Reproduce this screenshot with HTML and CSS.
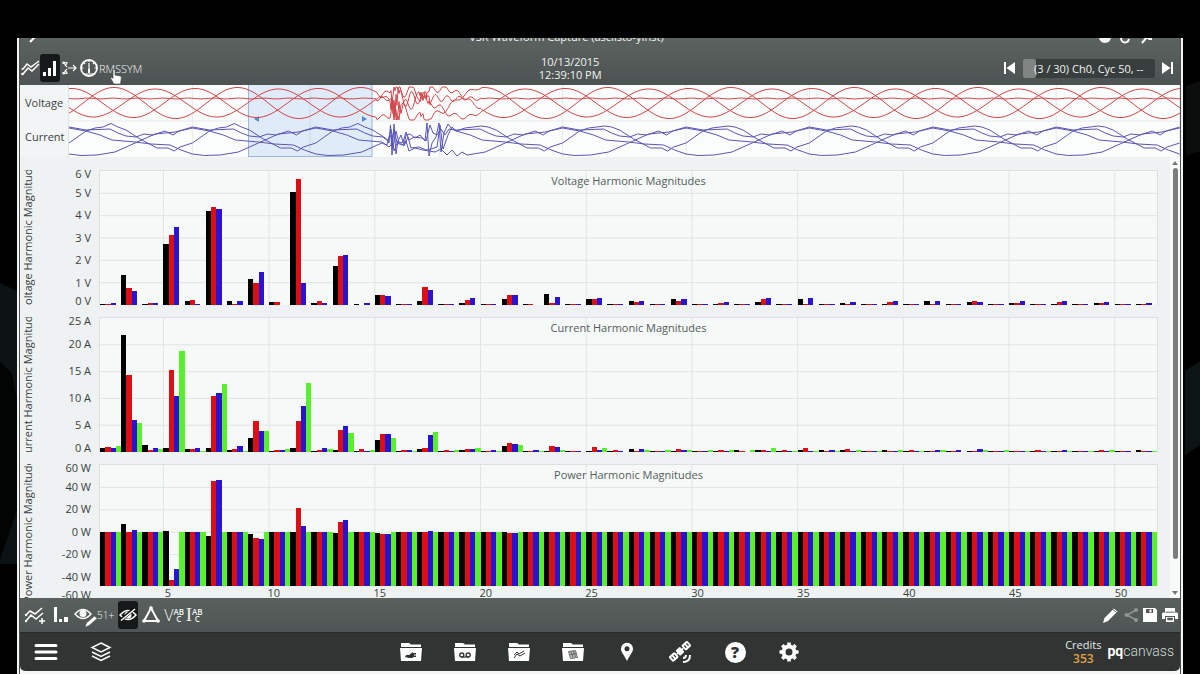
FILE: index.html
```html
<!DOCTYPE html>
<html lang="en">
<head>
<meta charset="utf-8">
<title>pqcanvass – Waveform Capture</title>
<link rel="stylesheet" href="styles.css">
</head>
<body>
<svg class="backdrop backdrop-left" viewBox="0 0 17 674" preserveAspectRatio="none" aria-hidden="true">
  <path d="M0 283l17 8v273H0v-10l15-45V400L12 374 0 362z" fill="#0d1314"/>
  <path d="M0 362l12 12 5 26v110L0 560z" fill="#020303"/>
</svg>
<svg class="backdrop backdrop-right" viewBox="0 0 17 674" preserveAspectRatio="none" aria-hidden="true">
  <path d="M3 86l14-5v70L3 156z" fill="#0c0e0e"/>
  <path d="M2 371l15-10v84L2 455z" fill="#0d1414"/>
</svg>
<main class="window">
  <header class="topbar">
    <div class="title-row">
      <button class="back" aria-label="Back"><svg width="10" height="12" viewBox="0 0 10 12"><path d="M3 1l4 5-5 5" class="ln"/></svg></button>
      <h1>VSR Waveform Capture (asciisto-yInst)</h1>
      <div class="title-icons">
        <svg width="14" height="14" viewBox="0 0 14 14"><circle cx="7" cy="7" r="6" fill="#f4f7f6"/><path d="M7 3v4" stroke="#555b5a" stroke-width="2"/></svg>
        <svg width="12" height="14" viewBox="0 0 12 14"><path d="M3 5a4 4 0 1 0 6 4" class="ln"/></svg>
        <svg width="14" height="14" viewBox="0 0 14 14"><path d="M2 13l5-6 2 2h3" class="ln"/></svg>
      </div>
    </div>
    <div class="nav-row">
      <div class="tools">
        <button aria-label="Waveform"><svg width="20" height="20" viewBox="0 0 20 20"><path d="M3 11l4-5 4 3 8-6M3 16l5-6 4 3 7-7" class="ln thin"/><circle cx="2.500" cy="16" r="1.300" fill="#fff"/><circle cx="2.500" cy="11" r="1" fill="#fff"/></svg></button>
        <button class="active" aria-label="Harmonics"><svg width="16" height="20" viewBox="0 0 16 20"><path d="M1 14h3v4H1zM6 10h3v8H6zM11 3h3v15h-3z" fill="#fff"/></svg></button>
        <button aria-label="Phasors"><svg width="19" height="20" viewBox="0 0 19 20"><path d="M3 4l4 1-2 3M4 5l3 4M3 16l4-1-2-3M4 15l3-4M3 4v2M3 16v-2M8 10h8M13 7l3 3-3 3" class="ln fine"/></svg></button>
        <button aria-label="Meters"><svg width="20" height="20" viewBox="0 0 20 20"><circle cx="10" cy="10" r="8" fill="none" stroke="#fff" stroke-width="1.800"/><path d="M10 5v10M10 2v2M2.500 10h2M15.500 10h2M4.700 4.700l1.400 1.400M15.300 4.700l-1.400 1.400M5 16h10" stroke="#fff" stroke-width="1.200"/><rect x="9" y="11" width="2" height="4" fill="#fff"/></svg></button>
        <button class="text-tool">RMS</button><button class="text-tool">SYM</button>
      </div>
      <time class="stamp" datetime="2015-10-13T12:39:10">10/13/2015<br>12:39:10 PM</time>
      <div class="pager">
        <button aria-label="Previous"><svg width="12" height="12" viewBox="0 0 12 12"><path d="M0 0h2v12H0zM11 0v12L2.500 6z" fill="#fff"/></svg></button>
        <div class="slider">
          <input id="capture" type="range" min="1" max="30" value="1">
          <label for="capture">(3 / 30) Ch0, Cyc 50, --</label>
        </div>
        <button aria-label="Next"><svg width="12" height="12" viewBox="0 0 12 12"><path d="M9 0h2v12H9zM0 0v12l8.500-6z" fill="#fff"/></svg></button>
      </div>
    </div>
    <svg class="cursor" width="12" height="16" viewBox="0 0 12 16" aria-hidden="true"><path d="M3 1.500c0-1.500 2-1.500 2 0V6l5 1c1 .3 1.500 1 1.300 2L10.500 15H4L1 10c-.6-1.200.5-2 1.300-1.200L3 9.500z" fill="#fff" stroke="#444" stroke-width=".6"/></svg>
  </header>

  <section class="overview">
    <div class="overview-labels"><span>Voltage</span><span>Current</span></div>
    <svg id="waves" viewBox="0 0 1111 72" preserveAspectRatio="none" role="img" aria-label="Voltage and current waveforms"></svg>
  </section>

  <section class="panel">
    <div class="charts" id="charts"></div>
    <div class="scrollbar" aria-hidden="true">
      <svg width="6" height="4" viewBox="0 0 6 4"><path d="M3 0l3 4H0z" fill="#777"/></svg>
      <div class="track"><div class="thumb"></div></div>
      <svg width="6" height="4" viewBox="0 0 6 4"><path d="M3 4l3-4H0z" fill="#777"/></svg>
    </div>
  </section>

  <div class="toolbar">
    <div class="tools">
      <button aria-label="Add chart"><svg width="22" height="20" viewBox="0 0 22 20"><path d="M2 10l4-4 5 3 7-6M2 16l5-6 5 4 7-6M18 13v6M15 16h6" class="ln thin"/><circle cx="2" cy="10" r="1.200" fill="#fff"/><circle cx="2" cy="16" r="1.200" fill="#fff"/></svg></button>
      <button class="bars" aria-label="Bars"><svg width="16" height="20" viewBox="0 0 16 20"><path d="M1 2h3v15H1zM6 14h3v3H6zM11 12h4v5h-4z" fill="#fff"/></svg></button>
      <button aria-label="Edit view"><svg width="24" height="24" viewBox="0 0 24 24"><path d="M2 11q8-9 16 0-8 9-16 0z" fill="none" stroke="#fff" stroke-width="1.500"/><circle cx="10" cy="10.500" r="3.500" fill="#fff"/><path d="M12 24l1.500-4 8-7 2.500 2.500-8 7z" fill="#fff" stroke="#555b5a" stroke-width=".5"/></svg></button>
      <button class="count">51+</button>
      <button class="active" aria-label="Hide"><svg width="18" height="20" viewBox="0 0 18 20"><path d="M1 10q8-9 16 0-8 9-16 0z" fill="none" stroke="#fff" stroke-width="1.500"/><circle cx="9" cy="10" r="3.500" fill="#fff"/><path d="M2 15L15 4" stroke="#111" stroke-width="3.500"/><path d="M2 15.500L16 4" class="ln thin"/></svg></button>
      <button class="delta" aria-label="Delta"><svg width="22" height="20" viewBox="0 0 22 20"><path d="M11 3l7 13H4z" class="ln"/><g fill="#fff"><circle cx="11" cy="3" r="1.800"/><circle cx="18" cy="16" r="1.800"/><circle cx="4" cy="16" r="1.800"/></g></svg></button>
      <button class="phase" aria-label="Voltage phases"><span>V</span><small>AB<br>C</small></button>
      <button class="phase" aria-label="Current phases"><span class="serif">I</span><small>AB<br>C</small></button>
    </div>
    <div class="actions">
      <button aria-label="Edit"><svg width="16" height="16" viewBox="0 0 16 16"><path d="M0 16l1.500-5L11 1.500l3.500 3L5 14z" fill="#fff"/><path d="M10 2.500l3.500 3" stroke="#555b5a" stroke-width=".8"/></svg></button>
      <button aria-label="Share"><svg width="14" height="16" viewBox="0 0 14 16"><path d="M12 3L3 8l9 5" fill="none" stroke="#909594" stroke-width="1.500"/><g fill="#909594"><circle cx="12" cy="3" r="2"/><circle cx="2.500" cy="8" r="2"/><circle cx="12" cy="13" r="2"/></g></svg></button>
      <button aria-label="Save"><svg width="14" height="14" viewBox="0 0 14 14"><path d="M0 0h12l2 2v12H0z" fill="#fff"/><path d="M3 1h7v4H3z" fill="#555b5a"/><path d="M6.500 1.500h2v3h-2z" fill="#fff"/></svg></button>
      <button aria-label="Print"><svg width="16" height="14" viewBox="0 0 16 14"><path d="M3 0h10v4H3zM1 4.500h14l1 1V11h-3V8H3v3H0V5.500zM4 9h8v5H4z" fill="#fff"/><path d="M5.500 10h5v2h-5zM4 4h8" fill="#555b5a" stroke="#555b5a" stroke-width=".6"/></svg></button>
    </div>
  </div>

  <footer class="dock">
    <div class="dock-left">
      <button aria-label="Menu"><svg width="24" height="18" viewBox="0 0 24 18"><path d="M2 2.500h20M2 9h20M2 15.500h20" stroke="#fff" stroke-width="3" stroke-linecap="round"/></svg></button>
      <button aria-label="Layers"><svg width="22" height="20" viewBox="0 0 22 20"><path d="M11 1l9 4.500-9 4.500-9-4.500zM2 10l9 4.500 9-4.500M2 14l9 4.500 9-4.500" class="ln thin"/></svg></button>
    </div>
    <nav class="dock-center">
      <button aria-label="Sources"><svg width="24" height="20" viewBox="0 0 24 20"><path class="folder" d="M2 1h8l2 1.500h10V5H2zM1 6h22l-1 13H2z"/><path d="M6 15q1-3 4-2l4-3v6h-4zM14 11h3v1.500h-2v1h2V15h-3z" fill="#303534"/></svg></button>
      <button aria-label="Recordings"><svg width="24" height="20" viewBox="0 0 24 20"><path class="folder" d="M2 1h8l2 1.500h10V5H2zM1 6h22l-1 13H2z"/><path d="M8.500 15h7" stroke="#303534" stroke-width="1.300"/><g fill="none" stroke="#303534" stroke-width="1.400"><circle cx="8.800" cy="13" r="2"/><circle cx="15.200" cy="13" r="2"/></g></svg></button>
      <button aria-label="Waveforms"><svg width="24" height="20" viewBox="0 0 24 20"><path class="folder" d="M2 1h8l2 1.500h10V5H2zM1 6h22l-1 13H2z"/><path d="M7 13l3-3 2 2 5-3M7 16l3-4 3 2 5-3" fill="none" stroke="#303534"/></svg></button>
      <button aria-label="Reports"><svg width="24" height="20" viewBox="0 0 24 20"><path class="folder" d="M2 1h8l2 1.500h10V5H2zM1 6h22l-1 13H2z"/><path d="M7.500 9.500l7-1 2 7-7 1zM10 9.500l2 6M12.500 9l2 6M8.500 12.500l7-1" fill="#b4b8b7" stroke="#555b5a" stroke-width=".8"/></svg></button>
      <button aria-label="Locations"><svg width="24" height="20" viewBox="0 0 24 20"><path d="M12 19C9 13 6 10 6 6.800a6 6 0 0 1 12 0C18 10 15 13 12 19z" fill="#fff"/><circle cx="12" cy="6.800" r="2.500" fill="#303534"/></svg></button>
      <button aria-label="Satellite"><svg width="24" height="22" viewBox="0 0 24 22"><g transform="rotate(-42 11 11)"><rect x="-1" y="7" width="8" height="7" rx="1.500" fill="#fff"/><rect x="8.500" y="7" width="6" height="7" rx="1" fill="#fff"/><rect x="16" y="7" width="8" height="7" rx="1.500" fill="#fff"/><path d="M7 10.500h9" stroke="#fff" stroke-width="1.500"/><path d="M1.500 9v3M4.500 9v3M18.500 9v3M21.500 9v3" stroke="#303534" stroke-width="1.200"/></g><path d="M14 17q3 0 3-3M14 21q7 0 7-7" class="ln"/></svg></button>
      <button aria-label="Help"><span class="help">?</span></button>
      <button aria-label="Settings"><svg width="24" height="20" viewBox="0 0 24 20"><circle cx="12" cy="10" r="5.500" fill="none" stroke="#fff" stroke-width="4"/><path d="M12 .5v4M12 15.500v4M2.500 10h4M17.500 10h4M5.300 3.300l3 3M15.700 13.700l3 3M18.700 3.300l-3 3M8.300 13.700l-3 3" stroke="#fff" stroke-width="3.600"/></svg></button>
    </nav>
    <div class="dock-right">
      <div class="credits"><span>Credits</span><strong>353</strong></div>
      <a class="brand" href="#"><b>pq</b>canvass</a>
    </div>
  </footer>
</main>
<script src="app.js"></script>
</body>
</html>
```

FILE: styles.css
```css
* { box-sizing: border-box; }

body {
  margin: 0;
  padding: 38px 17px 0;
  height: 100vh;
  display: flex;
  flex-direction: column;
  overflow: hidden;
  background: #000;
  font-family: "Open Sans", "Noto Sans", sans-serif;
  font-size: 11px;
  color: #3a3f3f;
}

button {
  display: flex;
  align-items: center;
  justify-content: center;
  padding: 0;
  border: 0;
  background: none;
  color: inherit;
  font: inherit;
}

svg { display: block; }
.ln { fill: none; stroke: #fff; stroke-width: 2; }
.ln.thin { stroke-width: 1.5; }
.ln.fine { stroke-width: 1.2; }

.backdrop { position: absolute; top: 0; width: 17px; height: 100%; }
.backdrop-left { left: 0; }
.backdrop-right { right: 0; }

.window {
  flex: 1;
  min-height: 0;
  display: flex;
  flex-direction: column;
  padding: 0 3px 3px;
  background: linear-gradient(90deg, #f4f6f6 2px, #4a4f4f 2px, #4a4f4f 3px, #f4f6f6 3px, #f4f6f6 calc(100% - 3px), #4a4f4f calc(100% - 3px), #4a4f4f calc(100% - 2px), #f4f6f6 calc(100% - 2px));
}

/* Header */
.topbar {
  position: relative;
  height: 47px;
  overflow: hidden;
  background: linear-gradient(#5c6260, #4d5352);
  color: #f0f3f2;
}
.title-row, .nav-row {
  display: grid;
  grid-template-columns: 9fr auto 10fr;
  align-items: center;
}
.title-row {
  height: 18px;
  margin-top: -10px;
  padding: 0 26px 0 8px;
}
.title-row h1 { margin: 0; font-size: 11px; font-weight: 400; line-height: 18px; }
.back { justify-self: start; }
.title-icons { display: flex; justify-content: flex-end; gap: 8px; }
.nav-row {
  height: 36px;
  margin-top: 4px;
}
.nav-row, .toolbar { padding-right: 2px; }
.tools { display: flex; align-items: center; }
.tools .active { height: 28px; width: 20px; border-radius: 3px; background: #151919; }
.text-tool { font-weight: 300; }
.stamp { text-align: center; line-height: 13px; }
.pager { display: flex; justify-content: flex-end; align-items: center; gap: 7px; padding-right: 4px; }
.slider { display: grid; width: 132px; height: 19px; align-items: center; }
.slider > * { grid-area: 1 / 1; }
.slider input {
  appearance: none;
  width: 100%;
  height: 19px;
  margin: 0;
  border-radius: 2px;
  background: #383e3d;
}
.slider input::-webkit-slider-thumb { appearance: none; width: 13px; height: 19px; border-radius: 2px; background: #808584; }
.slider label { padding-left: 11px; white-space: nowrap; pointer-events: none; }
.cursor { position: absolute; left: 90px; top: 31px; }

/* Waveform overview */
.overview { display: grid; grid-template-columns: 49px 1fr; height: 72px; background: #f2f5f5; }
.overview-labels { display: grid; grid-template-rows: 1fr 1fr; align-items: center; padding: 0 0 3px 5px; border-right: 1px solid #dde3e2; }
#waves { width: 100%; height: 100%; background: #fbfdfd; }
#waves polyline, #waves line { fill: none; vector-effect: non-scaling-stroke; }
.volt { stroke: #d2474c; }
.amp { stroke: #5a55b8; }
#waves .guide { stroke: #e3ebea; }

/* Chart panel */
.panel { flex: 1; min-height: 0; display: grid; grid-template-columns: 1fr 10px; overflow: hidden; background: #eef2f2; }
.charts { display: flex; flex-direction: column; gap: 12px; padding: 13px 12px 0 0; min-height: 0; }
.chart { display: grid; grid-template-columns: 16px 63px 1fr; height: 135px; flex: none; }
.axis-name { display: flex; align-items: center; justify-content: center; overflow: hidden; height: 135px; padding-bottom: 6px; }
.axis-name span { writing-mode: vertical-rl; transform: rotate(180deg); white-space: nowrap; line-height: 14px; flex: none; }
.axis-y { display: flex; flex-direction: column; height: 135px; padding-right: 8px; text-align: right; }
.axis-y span { flex: 2 1 0; display: flex; align-items: center; justify-content: flex-end; min-height: 0; line-height: 8px; }
.axis-y span:first-child { flex: 1 1 0; align-items: flex-start; }
.axis-y span:last-child { flex: 1 1 0; align-items: flex-end; }
.plot { display: grid; grid-template-rows: 135px auto; }
.plot.short { grid-template-rows: 122px auto; }
.plot > svg, .plot > h2 { grid-area: 1 / 1; }
.plot > svg { width: 100%; height: 100%; background: #f5f9f8; border: 1px solid #dbe0e0; border-bottom: 0; }
.plot > h2 { margin: 0; padding-top: 3px; text-align: center; font-size: 11px; font-weight: 400; line-height: 15px; color: #555b5b; z-index: 1; }
.grid { stroke: #dfe5e4; vector-effect: non-scaling-stroke; }
.axis-x { display: flex; padding-left: 16px; margin-right: -16px; line-height: 14px; }
.axis-x span { flex: 1; text-align: center; }
.scrollbar { display: flex; flex-direction: column; align-items: center; gap: 3px; padding: 4px 0 3px; background: #f8fafa; }
.track { flex: 1; width: 5px; }
.thumb { width: 5px; height: 93%; border-radius: 3px; background: #797d7d; }

/* Lower toolbar */
.toolbar { display: flex; justify-content: space-between; align-items: center; height: 34px; padding-left: 4px; background: linear-gradient(#5a605e, #4f5554); color: #f0f3f2; }
.bars { margin: 0 4px 0 7px; }
.count { font-size: 10px; font-weight: 300; margin-right: 4px; }
.delta { margin: 0 2px; }
.phase { width: 20px; }
.phase span { font-size: 16px; font-weight: 300; line-height: 20px; }
.phase .serif { font-family: "Liberation Serif", serif; font-size: 19px; }
.phase small { font-size: 8px; font-weight: 600; line-height: 7px; }
.actions { display: flex; align-items: center; gap: 5px; }

/* Dock */
.dock {
  display: grid;
  grid-template-columns: 1fr auto 1fr;
  align-items: center;
  height: 39px;
  border-radius: 0 0 5px 5px;
  background: #303534;
  border-top: 1px solid #262b2a;
  color: #e6eae9;
}
.dock-left { display: flex; gap: 32px; padding-left: 14px; }
.dock-center { display: flex; gap: 29px; }
.dock-center { gap: 30px; }
.dock-center button { width: 24px; height: 24px; }
.folder { fill: #fff; }
.help { width: 21px; height: 21px; border-radius: 50%; background: #fff; color: #303534; font-size: 16px; font-weight: 800; line-height: 21px; }
.dock-right { display: flex; justify-content: flex-end; align-items: center; gap: 6px; padding-right: 6px; }
.credits { display: flex; flex-direction: column; align-items: center; line-height: 14px; }
.credits strong { color: #e0a044; font-size: 12px; font-weight: 600; }
.brand { color: #d5dad9; text-decoration: none; font-family: Roboto, sans-serif; font-size: 14px; font-weight: 300; line-height: 18px; padding-bottom: 3px; }
.brand b { color: #fff; font-weight: 700; }
```

FILE: app.js
```js
const COLORS = ["#000", "#dc1014", "#2a14d2", "#58f02c"];
const FIRST = 2, COUNT = 50;

const voltage = {
  2: [.06, .04, .07], 3: [1.33, .75, .62], 4: [.05, .1, .07], 5: [2.75, 3.12, 3.5],
  6: [.2, .23, .04], 7: [4.22, 4.4, 4.3], 8: [.2, .03, .17], 9: [1.15, 1, 1.47],
  10: [.12, .13, .02], 11: [5.05, 5.65, .97], 12: [.08, .18, .1], 13: [1.76, 2.2, 2.24],
  14: [.06, .02, .07], 15: [.47, .47, .4], 16: [.05, .04, .03], 17: [.18, .8, .68],
  19: [.1, .22, .33], 21: [.28, .45, .45], 22: [.05, .03, .02], 23: [.48, .1, .37],
  25: [.27, .27, .32], 27: [.2, .15, .18], 29: [.28, .2, .25], 31: [.04, .1, .12],
  33: [.15, .25, .3], 35: [.28, .04, .3], 36: [.05, .03, .03], 37: [.1, .06, .15],
  38: [.05, .03, .03], 39: [.06, .12, .2], 41: [.17, .05, .17], 43: [.12, .17, .12],
  45: [.07, .07, .18], 47: [.05, .12, .18], 49: [.07, .1, .14], 51: [.04, .04, .08]
};
const current = {
  2: [.8, .95, .8, 1.1], 3: [21.8, 14.3, 6, 5.5], 4: [1.3, .3, .7, .6], 5: [.7, 15.3, 10.5, 18.9],
  6: [.5, .6, .7, .1], 7: [.7, 10.4, 11, 12.6], 8: [.4, .6, 1.1, .2], 9: [2.6, 5.8, 4, 4],
  10: [.2, .4, .4, .6], 11: [.8, 5.8, 8.5, 12.8], 12: [.2, .4, .8, .6], 13: [.4, 4.1, 4.9, 3.6],
  14: [.1, .5, .2, .3], 15: [2.2, 3.3, 3.4, 2.6], 16: [.2, .4, .4, .2], 17: [.6, .7, 3.1, 3.8],
  18: [.1, .4, .1, .3], 19: [.3, .6, .5, .8], 20: [.1, .1, .3, .1], 21: [1.1, 1.6, 1.4, 1.3],
  22: [.2, .1, .4, .2], 23: [.1, 1.2, 1, .3], 25: [.2, 1, .3, .7], 26: [.1, .4, .1, 0],
  27: [.5, .1, .5, .4], 28: [.1, .1, .2, .3], 29: [.1, .5, .3, .4], 30: [.1, .1, .2, .4],
  31: [.1, .3, .1, .4], 32: [.3, .1, 0, .4], 33: [.3, .3, .1, .8], 34: [.1, .3, .1, .1],
  35: [.3, .7, .1, .1], 36: [.4, .2, .3, .1], 37: [.3, .6, .1, .4], 38: [.1, .1, .2, .1],
  39: [.3, .1, .2, .3], 40: [.1, .3, .1, .1], 41: [.1, .2, .4, .3], 42: [.1, .1, .3, 0],
  43: [.1, .2, .5, .3], 44: [.1, .1, .1, .4], 45: [.1, .2, .1, .1], 46: [.1, .3, .1, .2],
  47: [.1, .1, .3, .2], 48: [.1, .1, .2, .1], 49: [.1, .3, .1, .4], 50: [.2, .1, .1, 0], 51: [.4, .2, .1, .1]
};
const power = {
  3: [7.5, 0, 1.8, 0], 5: [1, -43, -33, 0], 7: [-3, 46, 47, 0], 9: [-2, -5, -6, 0],
  11: [0, 22, 6, 0], 13: [-1, 9, 11, 0], 15: [-1, -1.5, -1.5, 0], 17: [0, .4, 1, 0], 21: [0, -1, -.6, 0]
};

const charts = [
  { name: "Voltage", unit: "V", top: 6, step: 1, low: 0, labels: [6, 5, 4, 3, 2, 1, 0], data: voltage, rest: [.03, .03, .03] },
  { name: "Current", unit: "A", top: 25, step: 5, low: 0, labels: [25, 20, 15, 10, 5, 0], data: current, rest: [.1, .1, .1, 0] },
  { name: "Power", unit: "W", top: 60, step: 20, low: -48, labels: [60, 40, 20, 0, -20, -40, -60], data: power, rest: [0, 0, 0, 0], short: true }
];

function plot(c) {
  const W = 1060, H = c.short ? 122 : 135;
  const y = v => (c.top - v) / (c.top - c.low) * H;
  const group = W / COUNT, bar = group / 4;
  let out = "";
  for (let v = c.top - c.step; v > c.low; v -= c.step)
    out += `<line class="grid" x1="0" x2="${W}" y1="${y(v)}" y2="${y(v)}"/>`;
  for (let h = 5; h <= 50; h += 5)
    out += `<line class="grid" x1="${(h - FIRST) * group}" x2="${(h - FIRST) * group}" y1="0" y2="${H}"/>`;
  for (let h = FIRST; h < FIRST + COUNT; h++)
    (c.data[h] || c.rest).forEach((v, i) => {
      out += `<rect x="${(h - FIRST) * group + i * bar}" y="${y(v)}" width="${bar}" height="${H - y(v)}" fill="${COLORS[i]}" shape-rendering="crispEdges"/>`;
    });
  return `<svg viewBox="0 0 ${W} ${H}" preserveAspectRatio="none" aria-hidden="true">${out}</svg>`;
}

document.getElementById("charts").innerHTML = charts.map(c => `
  <article class="chart">
    <div class="axis-name"><span>${c.name} Harmonic Magnitudes</span></div>
    <div class="axis-y">${c.labels.map(l => `<span>${l} ${c.unit}</span>`).join("")}</div>
    <div class="plot${c.short ? " short" : ""}">
      ${plot(c)}
      <h2>${c.name} Harmonic Magnitudes</h2>
      ${c.short ? `<div class="axis-x">${[5, 10, 15, 20, 25, 30, 35, 40, 45, 50].map(n => `<span>${n}</span>`).join("")}</div>` : ""}
    </div>
  </article>`).join("");

/* Waveforms: steady cycles with a switching transient between x = 315 and x = 400 */
const CYCLE = 123.4;
const lineOf = (pts, cls) => `<polyline class="${cls}" points="${pts.map(p => p[0].toFixed(1) + "," + p[1].toFixed(1)).join(" ")}"/>`;

function burst(x, k) {
  if (x < 308 || x > 412) return 0;
  if (x < 322) return 2.5 * Math.sin((x - 308) / 2.2 + k);
  const fade = Math.exp(-(x - 322) / 42);
  const slow = 11 * Math.sin((x - 322) * (.38 + .05 * k) + k * 2.1);
  const fast = x < 332 ? 10 * Math.sin(x * (1.9 + k * .3)) : (x > 350 && x < 362) ? 6 * Math.sin(x * (1.7 + k * .2)) : 0;
  return fade * (slow + fast);
}
function voltageLine(peak, amp, k) {
  const pts = [];
  for (let x = 0; x <= 1111; x++) {
    const base = amp ? 18 - amp * Math.cos((x - peak) / CYCLE * 2 * Math.PI) : 13.5 + .4 * Math.sin(x / 4);
    pts.push([x, Math.max(2, Math.min(35, base + burst(x, k)))]);
  }
  return lineOf(pts, "volt");
}

const tile = [
  [[0, 58], [17, 46], [26, 43], [34, 42], [42, 38.5], [49, 42], [57, 45], [71, 54], [88, 63], [99, 63], [105, 66], [111, 62], [123.4, 58]],
  [[0, 42], [17, 45], [41, 44], [49, 48], [57, 51], [67, 52], [75, 49], [84, 50], [96, 46], [104, 50], [110, 46], [123.4, 42]],
  [[0, 43], [17, 46], [31, 50], [43, 55], [66, 57], [82, 59], [101, 60], [112, 65], [123.4, 69]],
  [[0, 69], [12, 70.5], [28, 70], [46, 67], [66, 58], [86, 49], [106, 47], [123.4, 43]]
];
function currentLines() {
  let out = "";
  for (let k = 0; k < 9; k++)
    tile.forEach(t => {
      const pts = t.map(([x, y]) => [x + k * CYCLE, k > 2 && y < 40 ? 41 : y]);
      const before = pts.filter(p => p[0] < 318), after = pts.filter(p => p[0] > 384);
      if (before.length > 1) out += lineOf(before, "amp");
      if (after.length > 1) out += lineOf(after, "amp");
    });
  return out;
}
const transient = [
  [[317.8, 54], [320, 58], [321.5, 40], [323, 70], [325, 39], [327, 69], [329, 56], [332, 50], [335, 60], [337, 50], [341, 49], [346, 53], [351, 50], [356, 56], [358, 38], [360, 71], [363, 58], [367, 52], [370, 38], [372, 67], [375, 48], [379, 39], [383, 44], [387.2, 46]],
  [[313.8, 52], [319, 56], [322, 50], [324, 62], [327, 46], [330, 58], [334, 57], [337, 47], [340, 55], [345, 52], [353, 53], [357, 56], [361, 40], [364, 48], [368, 50], [372, 44], [376, 50], [380, 44], [387.2, 45]],
  [[312.8, 57], [320, 62], [322, 60], [325, 44], [328, 58], [333, 60], [337, 56], [340, 66], [346, 63], [354, 65], [360, 66], [366, 67], [372, 64], [378, 70], [383, 65], [388, 71], [393, 67], [398.2, 70]],
  [[312.8, 58], [318, 60], [322, 44], [325, 66], [329, 56], [335, 61], [339, 52], [342, 63], [350, 62], [357, 65], [362, 64], [368, 62], [371, 40], [374, 64], [379, 50], [383, 42], [387.2, 46]]
];

const waves = document.getElementById("waves");
let w = `<line class="guide" x1="0" x2="1111" y1="36" y2="36"/>`;
for (let x = 123.4; x < 1111; x += CYCLE) w += `<line class="guide" x1="${x}" x2="${x}" y1="0" y2="72"/>`;
w += `<rect x="179" y="0" width="124" height="72" fill="#dfebf8"/>
  <line x1="241" x2="241" y1="0" y2="72" stroke="#cbdaea"/>
  <line x1="179.500" x2="179.500" y1="0" y2="72" stroke="#9bb5dc"/>
  <line x1="303" x2="303" y1="0" y2="72" stroke="#9bb5dc"/>
  <line x1="179" x2="303" y1="71.500" y2="71.500" stroke="#9bb5dc"/>
  <path d="M185 34l5-3v6zM298 34l-5-3v6z" fill="#5d86cc"/>`;
w += voltageLine(45, 15.5, 0) + voltageLine(86, 14, 1) + voltageLine(126, 14.5, 2) + voltageLine(0, 0, 3);
w += currentLines() + transient.map(t => lineOf(t, "amp")).join("");
waves.innerHTML = w;
```
